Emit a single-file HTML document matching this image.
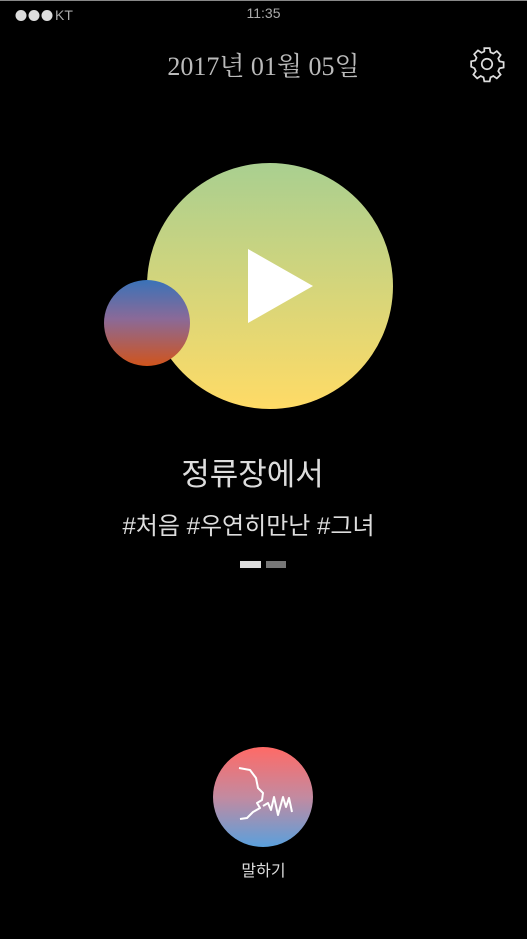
<!DOCTYPE html>
<html><head><meta charset="utf-8"><style>
body{margin:0;background:#000;width:527px;height:939px;overflow:hidden;position:relative;font-family:"Liberation Sans","Noto Sans CJK KR",sans-serif;color:#ddd}
.a{position:absolute}
</style></head><body>
<div class="a" style="left:0;top:0;width:527px;height:1px;background:#888"></div>
<svg class="a" style="left:15px;top:9px" width="40" height="13"><circle cx="6" cy="6.5" r="5.5" fill="#ddd"/><circle cx="19" cy="6.5" r="5.5" fill="#ddd"/><circle cx="32" cy="6.5" r="5.5" fill="#ddd"/></svg>
<div class="a" style="left:55px;top:7px;font-size:14px;color:#aaa">KT</div>
<div class="a" style="left:0;width:527px;top:5px;text-align:center;font-size:14px;color:#aaa">11:35</div>
<div class="a" style="left:0;width:527px;top:46px;text-align:center;font-size:26px;color:#bbb;font-family:'Liberation Serif','Noto Serif CJK SC',serif">2017년 01월 05일</div>
<svg class="a" style="left:468px;top:45px" width="38" height="38" viewBox="0 0 24 24" fill="none" stroke="#ddd" stroke-width="1.1"><circle cx="12" cy="12" r="3.3"/><path d="M10.3 2h3.4l.5 2.6 1.8.8 2.2-1.5 2.4 2.4-1.5 2.2.8 1.8 2.6.5v3.4l-2.6.5-.8 1.8 1.5 2.2-2.4 2.4-2.2-1.5-1.8.8-.5 2.6h-3.4l-.5-2.6-1.8-.8-2.2 1.5-2.4-2.4 1.5-2.2-.8-1.8L2 13.7v-3.4l2.6-.5.8-1.8-1.5-2.2 2.4-2.4 2.2 1.5 1.8-.8z"/></svg>
<div class="a" style="left:147px;top:163px;width:246px;height:246px;border-radius:50%;background:linear-gradient(#a9cf90,#ffdb66)"></div>
<svg class="a" style="left:0;top:0" width="527" height="939"><polygon points="248,249 313,286 248,323" fill="#fff"/></svg>
<div class="a" style="left:104px;top:280px;width:86px;height:86px;border-radius:50%;background:linear-gradient(#3a72b8,#8a6a98 45%,#d0541c)"></div>
<div class="a" style="left:-11px;width:527px;top:449px;text-align:center;font-size:31px;color:#ddd">정류장에서</div>
<div class="a" style="left:-15px;width:527px;top:506px;text-align:center;font-size:24px;color:#ddd">#처음 #우연히만난 #그녀</div>
<div class="a" style="left:240px;top:561px;width:21px;height:7px;background:#ddd"></div>
<div class="a" style="left:266px;top:561px;width:20px;height:7px;background:#777"></div>
<div class="a" style="left:213px;top:747px;width:100px;height:100px;border-radius:50%;background:linear-gradient(#ff6a66,#c38aa0 50%,#5aa0dc)"></div>
<svg class="a" style="left:0;top:0" width="527" height="939" fill="none" stroke="#fff" stroke-width="2" stroke-linejoin="round"><path d="M239 768 L250 770 L256 778 L258 788 L263 793 L262 800 L257 803 L260 808 L253 812 L247 818 L240 819"/><path d="M263 806 L268 803 L271 810 L274 797 L278 815 L283 797 L286 807 L289 798 L292 812"/></svg>
<div class="a" style="left:0;width:527px;top:857px;text-align:center;font-size:16px;color:#ddd">말하기</div>
</body></html>
